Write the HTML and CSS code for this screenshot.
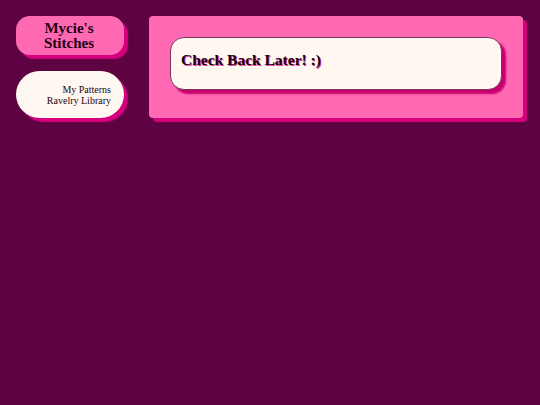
FILE: index.html
```html
<!DOCTYPE html>
<html>
<head>
<meta charset="utf-8">
<link rel="stylesheet" href="styles.css">
</head>
<body>
<div class="page">
  <aside class="sidebar">
    <div class="title-box"><h1 class="title">Mycie's<br>Stitches</h1></div>
    <nav class="nav-box">
      <a class="nav-link">My Patterns</a>
      <a class="nav-link">Ravelry Library</a>
    </nav>
  </aside>
  <main class="panel">
    <div class="card"><h2 class="card-title">Check Back Later! :)</h2></div>
  </main>
</div>
</body>
</html>
```
FILE: styles.css
```css
html, body {
  margin: 0;
  padding: 0;
  background: #5e0342;
  height: 100%;
}
body {
  font-family: "Liberation Serif", serif;
  color: #1a0010;
}
.page {
  display: flex;
  align-items: flex-start;
  padding: 16px 17px 16px 16px;
  gap: 25px;
}
.sidebar {
  width: 108px;
  flex: none;
  display: flex;
  flex-direction: column;
  gap: 16px;
}
.title-box {
  background: #ff69b4;
  border-radius: 14px;
  height: 39px;
  box-shadow: 4px 4px 1px #d6007f;
  display: flex;
  align-items: center;
  justify-content: center;
  padding-right: 2px;
  box-sizing: border-box;
}
.title {
  margin: 0;
  font-family: "Liberation Serif", serif;
  font-weight: bold;
  font-size: 15px;
  line-height: 15px;
  text-align: center;
  color: #1a0010;
}
.nav-box {
  background: #fff8f0;
  border-radius: 24px;
  height: 47px;
  box-shadow: 4px 4px 1px #d6007f;
  display: flex;
  flex-direction: column;
  justify-content: center;
  align-items: flex-end;
  padding-right: 13px;
  box-sizing: border-box;
}
.nav-link {
  font-family: "Liberation Serif", serif;
  font-size: 10px;
  line-height: 11px;
  color: #1a0010;
}
.panel {
  flex: 1;
  background: #ff69b4;
  border-radius: 4px;
  box-shadow: 4px 4px 1px #d6007f;
  padding: 21px 21px 28px 21px;
  height: 102px;
  box-sizing: border-box;
}
.card {
  background: #fff8f0;
  border: 1px solid #7a3560;
  border-radius: 14px;
  height: 53px;
  box-sizing: border-box;
  box-shadow: 4px 4px 2px #c8006f;
  padding: 0 10px;
  display: flex;
  align-items: center;
}
.card-title {
  margin: 0 0 7px 0;
  font-family: "Liberation Serif", serif;
  font-weight: bold;
  font-size: 15.5px;
  color: #1a0010;
  text-shadow: 1px 1px 0 #e0409a;
}
```
